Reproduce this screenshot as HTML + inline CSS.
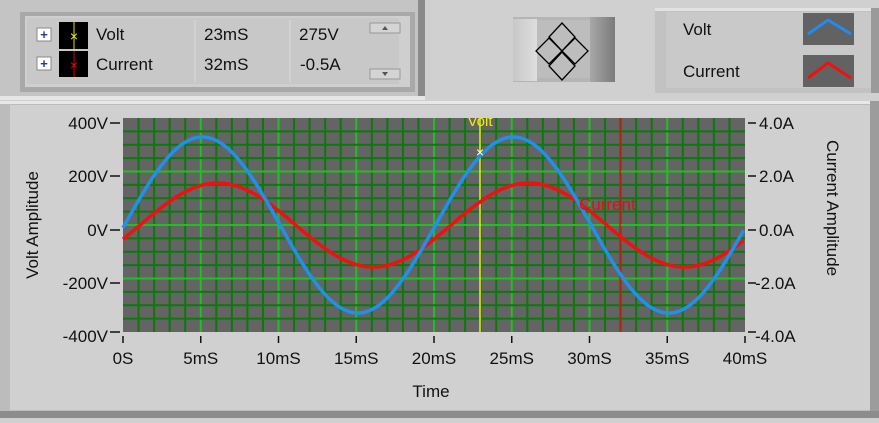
<!DOCTYPE html><html><head><style>body{margin:0;width:879px;height:418px;overflow:hidden;background:#d0d0d0;font-family:"Liberation Sans",sans-serif}</style></head><body>
<svg id="s" width="879" height="418" xmlns="http://www.w3.org/2000/svg" font-family="Liberation Sans, sans-serif">
<rect width="879" height="418" fill="#d0d0d0"/>
<rect x="0" y="0" width="425" height="100" fill="#c4c4c4"/>
<rect x="418" y="0" width="7" height="100" fill="#8a8a8a"/>
<rect x="0" y="96" width="425" height="4" fill="#e6e6e6"/>
<rect x="20" y="12" width="395" height="80" fill="#a9a9a9"/>
<rect x="25" y="16" width="385" height="71" fill="#cfcfcf"/>
<rect x="27" y="18" width="372" height="66" fill="#c8c8c8"/>
<line x1="195" y1="20" x2="195" y2="82" stroke="#dadada"/>
<line x1="290" y1="20" x2="290" y2="82" stroke="#dadada"/>
<rect x="37" y="28" width="14" height="13" fill="#fff" stroke="#888"/>
<text x="44" y="39" font-size="13" fill="#2a3a9a" text-anchor="middle" font-weight="bold">+</text>
<rect x="37" y="57" width="14" height="13" fill="#fff" stroke="#888"/>
<text x="44" y="68" font-size="13" fill="#2a3a9a" text-anchor="middle" font-weight="bold">+</text>
<rect x="59" y="22" width="29" height="27" fill="#000"/>
<line x1="74" y1="22" x2="74" y2="49" stroke="#e0e000"/><text x="74" y="41" font-size="14" fill="#e0e000" text-anchor="middle">×</text>
<rect x="59" y="51" width="29" height="26" fill="#000"/>
<line x1="74" y1="51" x2="74" y2="77" stroke="#e00000"/><text x="74" y="70" font-size="14" fill="#e00000" text-anchor="middle">×</text>
<g font-size="17" fill="#111"><text x="96" y="40">Volt</text><text x="96" y="70">Current</text>
<text x="204" y="40">23mS</text><text x="204" y="70">32mS</text>
<text x="299" y="40">275V</text><text x="300" y="70">-0.5A</text></g>
<rect x="370" y="23" width="30" height="10" fill="#d4d4d4" stroke="#999"/><path d="M382 30 L385 26 L388 30Z" fill="#555"/>
<rect x="370" y="69" width="30" height="10" fill="#d4d4d4" stroke="#999"/><path d="M382 72 L385 76 L388 72Z" fill="#555"/>
<defs><linearGradient id="bl" x1="0" x2="1"><stop offset="0" stop-color="#c8c8c8"/><stop offset="1" stop-color="#dedede"/></linearGradient>
<linearGradient id="br" x1="0" x2="1"><stop offset="0" stop-color="#a8a8a8"/><stop offset="1" stop-color="#7a7a7a"/></linearGradient></defs>
<rect x="513" y="17" width="102" height="65" fill="#b5b5b5"/>
<rect x="513" y="19" width="24" height="62" fill="url(#bl)"/>
<rect x="537" y="20" width="53" height="58" fill="#bdbdbd"/>
<rect x="590" y="17" width="25" height="65" fill="url(#br)"/>
<g fill="none" stroke="#000" stroke-width="1.3"><path d="M562 23 L575 37 L562 51 L549 37Z"/><path d="M549 38 L562 51 L549 64 L536 51Z"/><path d="M575 38 L588 51 L575 64 L562 51Z"/><path d="M562 52 L575 66 L562 80 L549 66Z"/></g>
<rect x="655" y="8" width="224" height="85" fill="#c2c2c2"/>
<rect x="655" y="8" width="224" height="3" fill="#e2e2e2"/>
<rect x="666" y="12" width="205" height="76" fill="#c9c9c9"/>
<rect x="871" y="8" width="8" height="85" fill="#9a9a9a"/>
<g font-size="17" fill="#111"><text x="683" y="35">Volt</text><text x="683" y="77">Current</text></g>
<rect x="803" y="13" width="51" height="32" fill="#626262"/>
<path d="M808 34 L828 20 L851 34" stroke="#1e8cf0" stroke-width="3" fill="none"/>
<rect x="803" y="55" width="51" height="32" fill="#626262"/>
<path d="M808 78 L828 63 L851 78" stroke="#f01010" stroke-width="3" fill="none"/>
<rect x="0" y="101" width="879" height="317" fill="#bcbcbc"/>
<rect x="0" y="101" width="879" height="3" fill="#e8e8e8"/>
<rect x="10" y="105" width="860" height="305" fill="#d0d0d0"/>
<rect x="870" y="101" width="9" height="317" fill="#9c9c9c"/>
<rect x="0" y="411" width="879" height="7" fill="#8c8c8c"/>
<rect x="123" y="118" width="622" height="214" fill="#646464"/>
<g id="grid"></g>
<line x1="480" y1="118" x2="480" y2="332" stroke="#f0f000" stroke-width="1.5"/>
<line x1="620" y1="118" x2="620" y2="332" stroke="#e01010" stroke-width="1.5"/>
<polyline id="cur" fill="none" stroke="#f01010" stroke-width="3.5"/>
<polyline id="volt" fill="none" stroke="#2090e8" stroke-width="3.5"/>
<text x="480" y="157" font-size="14" fill="#ffffc0" text-anchor="middle">×</text>
<text x="579" y="210" font-size="17" fill="#e01010">Current</text>
<text x="480" y="126" font-size="15" fill="#f0f000" text-anchor="middle" clip-path="url(#c)">Volt</text>
<clipPath id="c"><rect x="0" y="118" width="879" height="30"/></clipPath>
<g font-size="17" fill="#111" text-anchor="end">
<text x="108" y="129">400V</text><text x="108" y="182">200V</text><text x="108" y="236">0V</text><text x="108" y="289">-200V</text><text x="108" y="342">-400V</text></g>
<g stroke="#111" stroke-width="1.5"><line x1="110" y1="123" x2="120" y2="123"/><line x1="110" y1="176" x2="120" y2="176"/><line x1="110" y1="230" x2="120" y2="230"/><line x1="110" y1="283" x2="120" y2="283"/><line x1="110" y1="332" x2="120" y2="332"/>
<line x1="748" y1="123" x2="756" y2="123"/><line x1="748" y1="176" x2="756" y2="176"/><line x1="748" y1="230" x2="756" y2="230"/><line x1="748" y1="283" x2="756" y2="283"/><line x1="748" y1="332" x2="756" y2="332"/></g>
<g font-size="17" fill="#111"><text x="759" y="129">4.0A</text><text x="759" y="182">2.0A</text><text x="759" y="236">0.0A</text><text x="755" y="289">-2.0A</text><text x="755" y="342">-4.0A</text></g>
<g id="xt" font-size="17" fill="#111" text-anchor="middle"></g>
<text x="431" y="397" font-size="17" fill="#111" text-anchor="middle">Time</text>
<text transform="translate(38,225) rotate(-90)" font-size="17" fill="#111" text-anchor="middle">Volt Amplitude</text>
<text transform="translate(827,208) rotate(90)" font-size="17" fill="#111" text-anchor="middle">Current Amplitude</text>
</svg>
<script>
var ns="http://www.w3.org/2000/svg",g=document.getElementById('grid'),X0=123,W=622,T=118,H=214;
function L(x1,y1,x2,y2,c,w){var l=document.createElementNS(ns,'line');l.setAttribute('x1',x1);l.setAttribute('y1',y1);l.setAttribute('x2',x2);l.setAttribute('y2',y2);l.setAttribute('stroke',c);l.setAttribute('stroke-width',w);g.appendChild(l);}
for(var i=1;i<40;i++){var x=X0+i*W/40;L(x,T,x,T+H,i%5?'#0a7a0a':'#20c020',2);}
for(var j=1;j<16;j++){var y=T+j*H/16;L(X0,y,X0+W,y,j%4?'#0a7a0a':'#20c020',2);}
var xt=document.getElementById('xt');
for(var k=0;k<=8;k++){var x=X0+k*W/8;var t=document.createElementNS(ns,'text');t.setAttribute('x',x);t.setAttribute('y',364);t.textContent=k?(k*5)+'mS':'0S';xt.appendChild(t);var l=document.createElementNS(ns,'line');l.setAttribute('x1',x);l.setAttribute('y1',336);l.setAttribute('x2',x);l.setAttribute('y2',343);l.setAttribute('stroke','#111');l.setAttribute('stroke-width','1.5');xt.appendChild(l);}
var pv=[],pc=[],yc=T+H/2;
for(var t=0;t<=40;t+=0.1){var x=X0+t*W/40;pv.push(x.toFixed(1)+','+(yc-88*Math.sin(2*Math.PI*(t-0.1)/20)).toFixed(1));pc.push(x.toFixed(1)+','+(yc-42*Math.sin(2*Math.PI*(t-1.1)/20)).toFixed(1));}
document.getElementById('volt').setAttribute('points',pv.join(' '));
document.getElementById('cur').setAttribute('points',pc.join(' '));
</script>
</body></html>
